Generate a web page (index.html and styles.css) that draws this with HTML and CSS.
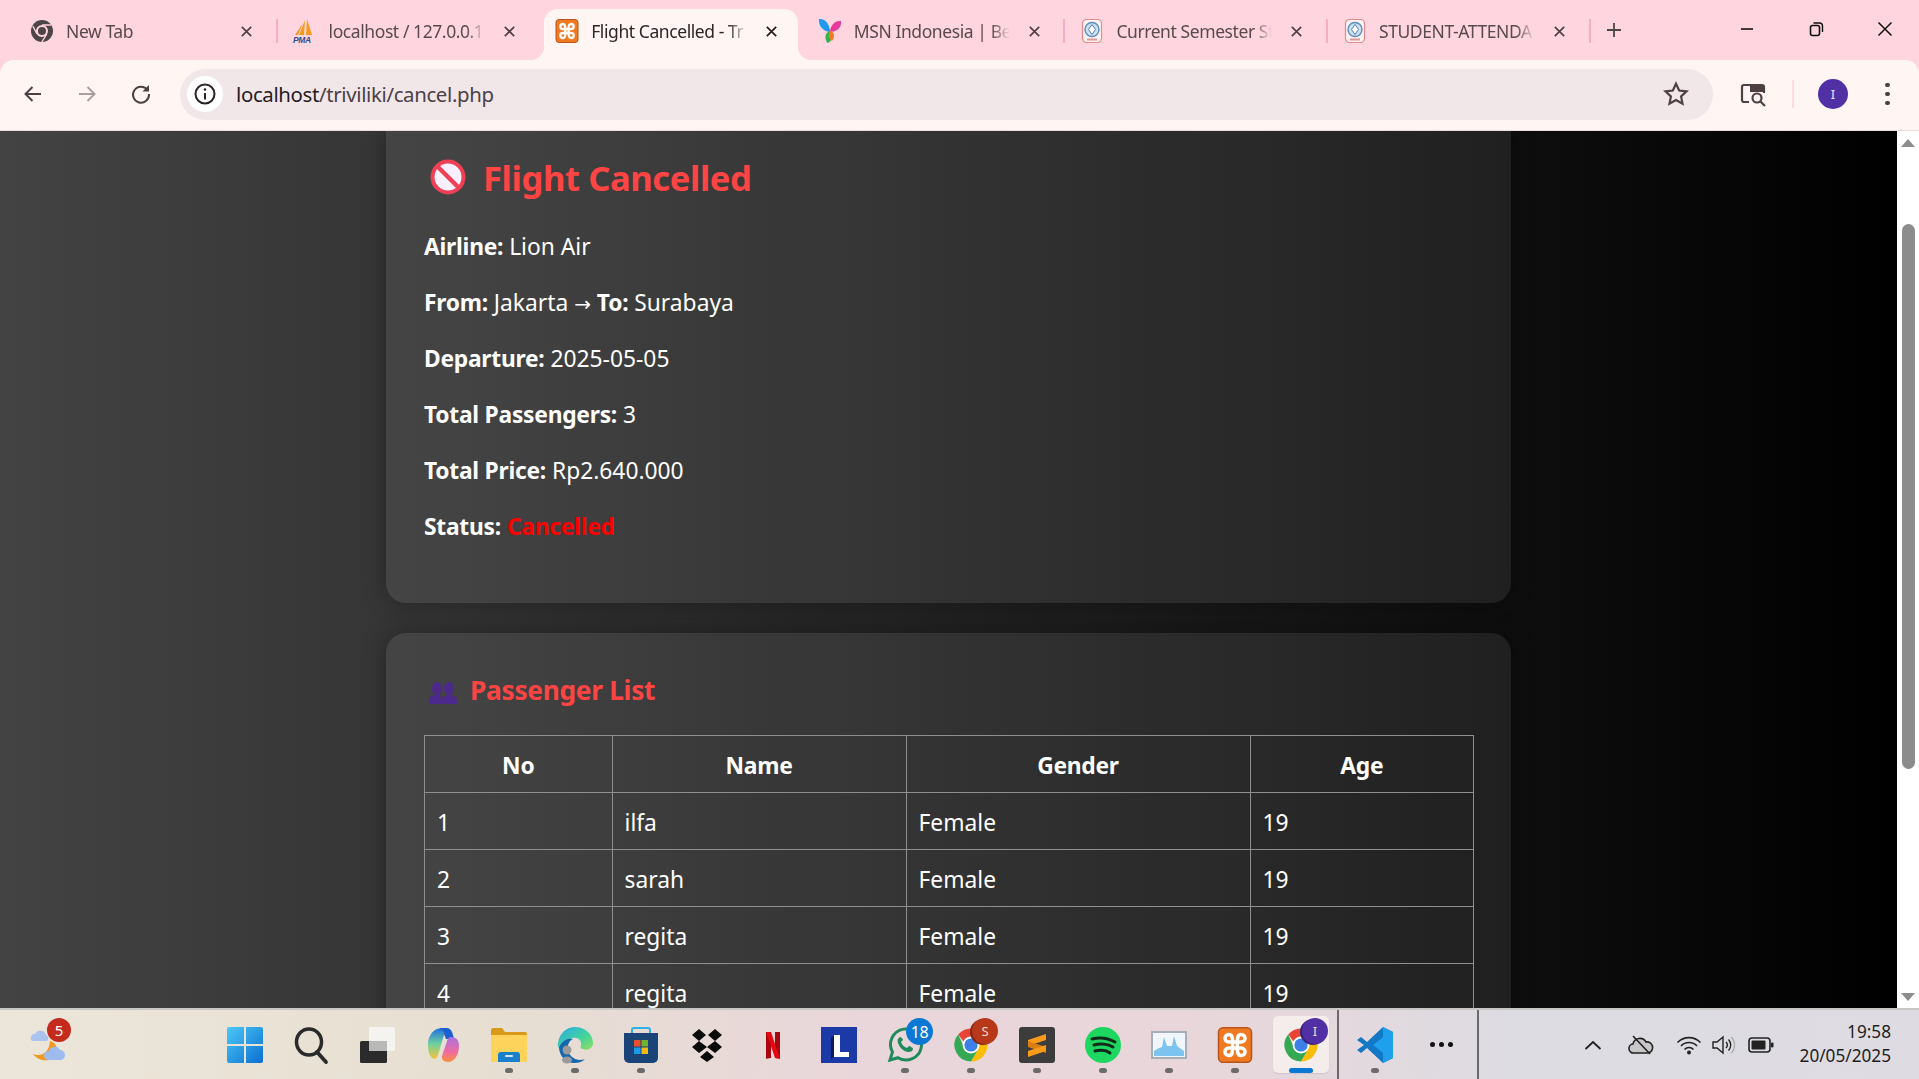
FILE: index.html
```html
<!DOCTYPE html>
<html lang="en">
<head>
<meta charset="utf-8">
<title>Flight Cancelled</title>
<link rel="stylesheet" href="styles.css">
</head>
<body>
<svg class="defs" aria-hidden="true">
  <symbol id="xampp" viewBox="0 0 24 24">
    <rect x="1" y="0.5" width="22" height="23" rx="3" fill="#ef7a22" stroke="#b9551a"/>
    <path d="M8 5c-3.600 0-3.600 5 0 5h8c3.600 0 3.600-5 0-5-2.400 0-2.400 2.500-2.400 5v4c0 2.500 0 5 2.400 5 3.600 0 3.600-5 0-5H8c-3.600 0-3.600 5 0 5 2.400 0 2.400-2.500 2.400-5v-4c0-2.500 0-5-2.400-5z" fill="none" stroke="#fff" stroke-width="2.300"/>
  </symbol>
  <symbol id="chrome" viewBox="0 0 24 24">
    <path d="M12 1a11 11 0 0 1 9.530 5.500H12a5.500 5.500 0 0 0-5 3.200L3.500 5A11 11 0 0 1 12 1z" fill="#ea4335"/>
    <path d="M21.530 6.500A11 11 0 0 1 12 23l4.700-8.200A5.500 5.500 0 0 0 16.800 9 5.500 5.500 0 0 0 12 6.500z" fill="#fbbc04"/>
    <path d="M3.500 5 7.900 15a5.500 5.500 0 0 0 8.800-.2L12 23A11 11 0 0 1 3.500 5z" fill="#34a853"/>
    <circle cx="12" cy="12" r="5.600" fill="#fff"/><circle cx="12" cy="12" r="4.400" fill="#3f7fe8"/>
  </symbol>
  <symbol id="uni" viewBox="0 0 24 24">
    <rect x="2.500" y="0.500" width="19" height="23" rx="4" fill="#fbf3f3" stroke="#e58a8a" stroke-width="1.200"/>
    <circle cx="12" cy="10.500" r="7" fill="#cfe0ef" stroke="#5b8dbd" stroke-width="1.400"/>
    <path d="M12 5.500l3.500 5-3.500 5-3.500-5z" fill="#fff" stroke="#4a7fb3"/>
    <rect x="7" y="19.500" width="10" height="2" fill="#d99"/>
  </symbol>
  <symbol id="close" viewBox="0 0 16 16">
    <path d="M3 3l10 10M13 3L3 13" fill="none" stroke="currentColor" stroke-width="1.800"/>
  </symbol>
</svg>

<header class="tabstrip">
  <div class="tab">
    <svg class="favicon" viewBox="0 0 24 24"><circle cx="12" cy="12" r="11" fill="#4d4648"/><circle cx="12" cy="12" r="6" fill="#ffd6df"/><circle cx="12" cy="12" r="4" fill="#4d4648"/><path d="M12 6h9M7 15L2.800 7M16.800 15l-5 8" stroke="#ffd6df" stroke-width="1.400"/></svg>
    <span class="title">New Tab</span>
    <svg class="x"><use href="#close"/></svg>
  </div>
  <div class="tab">
    <svg class="favicon" viewBox="0 0 24 24"><path d="M14 0l5 16h-6zM12 1l-1 15H6zM10 4L5 16H2z" fill="#f59a1f"/><text x="0" y="24" class="pma">PMA</text></svg>
    <span class="title">localhost / 127.0.0.1</span>
    <svg class="x"><use href="#close"/></svg>
  </div>
  <div class="tab active">
    <svg class="favicon"><use href="#xampp"/></svg>
    <span class="title">Flight Cancelled - Tr</span>
    <svg class="x"><use href="#close"/></svg>
  </div>
  <div class="tab">
    <svg class="favicon" viewBox="0 0 24 24"><path d="M1 0c6-1 11 5 11 13C7 13 0 8 1 0z" fill="#1e9bf0"/><path d="M23 2c1 7-5 11-11 11 0-5 4-12 11-11z" fill="#e6399b"/><path d="M11.500 12c-5 2-5 8-2 12 5-1 5-8 2-12z" fill="#35b34a"/><path d="M12 12c5 1 5 6 2 10-3-2-4-6-2-10z" fill="#f47b20"/></svg>
    <span class="title">MSN Indonesia | Be</span>
    <svg class="x"><use href="#close"/></svg>
  </div>
  <div class="tab sep">
    <svg class="favicon"><use href="#uni"/></svg>
    <span class="title">Current Semester St</span>
    <svg class="x"><use href="#close"/></svg>
  </div>
  <div class="tab sep">
    <svg class="favicon"><use href="#uni"/></svg>
    <span class="title">STUDENT-ATTENDA</span>
    <svg class="x"><use href="#close"/></svg>
  </div>
  <div class="tab-sep"></div>
  <svg class="newtab" viewBox="0 0 16 16"><path d="M8 1v14M1 8h14" stroke="#4d4648" stroke-width="1.800"/></svg>
  <div class="winctl">
    <svg viewBox="0 0 16 16"><path d="M2 8h12" stroke="#111" stroke-width="1.600"/></svg>
    <svg viewBox="0 0 16 16"><rect x="2.500" y="4.500" width="9" height="10" rx="2" fill="none" stroke="#111" stroke-width="1.600"/><path d="M5.500 2h6a3 3 0 0 1 3 3v6" fill="none" stroke="#111" stroke-width="1.400"/></svg>
    <svg viewBox="0 0 16 16"><path d="M1.500 1.500l13 13M14.500 1.500l-13 13" stroke="#111" stroke-width="1.500"/></svg>
  </div>
</header>

<nav class="toolbar">
  <svg class="tool" viewBox="0 0 24 24"><path d="M20 12H5M11.500 5L4.500 12l7 7" fill="none" stroke="#4d3f42" stroke-width="2"/></svg>
  <svg class="tool" viewBox="0 0 24 24"><path d="M4 12h15M12.500 5l7 7-7 7" fill="none" stroke="#ab9fa1" stroke-width="2"/></svg>
  <svg class="tool" viewBox="0 0 24 24"><path d="M18.500 8A8 8 0 1 0 20 12" fill="none" stroke="#4d3f42" stroke-width="2"/><path d="M20 3v6.500h-6.500z" fill="#4d3f42"/></svg>
  <div class="omnibox">
    <span class="info"><svg viewBox="0 0 24 24"><circle cx="12" cy="12" r="9.500" fill="none" stroke="#2c2226" stroke-width="2"/><path d="M12 11v6.500" stroke="#2c2226" stroke-width="2"/><circle cx="12" cy="7.500" r="1.300" fill="#2c2226"/></svg></span>
    <span class="url">localhost<span class="path">/triviliki/cancel.php</span></span>
    <svg class="star" viewBox="0 0 24 24"><path d="M12 2.500l2.900 6.300 6.800.8-5 4.700 1.300 6.700-6-3.400-6 3.400 1.300-6.700-5-4.700 6.800-.8z" fill="none" stroke="#4d3f42" stroke-width="2"/></svg>
  </div>
  <svg class="side" viewBox="0 0 26 26"><path d="M9 21H4a2 2 0 0 1-2-2V6a2 2 0 0 1 2-2h18a2 2 0 0 1 2 2v6" fill="none" stroke="#4d3f42" stroke-width="2.200"/><rect x="10" y="4" width="13" height="7" fill="#4d3f42"/><circle cx="17" cy="17" r="4.500" fill="none" stroke="#4d3f42" stroke-width="2.200"/><path d="M20.500 20.500L25 25" stroke="#4d3f42" stroke-width="2.200"/></svg>
  <span class="tool-sep"></span>
  <span class="avatar">I</span>
  <span class="menu"><i></i><i></i><i></i></span>
</nav>

<div class="viewport">
  <main class="page">
    <section class="card card-top">
      <h1 class="heading">
        <svg class="no-entry" viewBox="0 0 36 36"><circle cx="18" cy="18" r="15.500" fill="#f8efff" stroke="#ef4055" stroke-width="4"/><path d="M7 7l22 22" stroke="#ef4055" stroke-width="4.500"/></svg>
        <span>Flight Cancelled</span>
      </h1>
      <p class="line"><strong>Airline:</strong> Lion Air</p>
      <p class="line"><strong>From:</strong> Jakarta <span class="arrow-glyph">→</span> <strong>To:</strong> Surabaya</p>
      <p class="line"><strong>Departure:</strong> 2025-05-05</p>
      <p class="line"><strong>Total Passengers:</strong> 3</p>
      <p class="line"><strong>Total Price:</strong> Rp2.640.000</p>
      <p class="line"><strong>Status:</strong> <strong class="cancelled">Cancelled</strong></p>
    </section>
    <section class="card card-list">
      <h2 class="subheading">
        <svg class="people" viewBox="0 0 28 22"><g fill="#4b2a8c"><ellipse cx="8" cy="6.500" rx="5" ry="6.500"/><ellipse cx="20" cy="6.500" rx="5" ry="6.500"/><path d="M0 22v-3c0-4 3-6 7-6h2c3 0 5 2 5 6 0-4 2-6 5-6h2c4 0 7 2 7 6v3z"/></g></svg>
        <span>Passenger List</span>
      </h2>
      <table class="passengers">
        <colgroup><col class="c-no"><col class="c-name"><col class="c-gender"><col class="c-age"></colgroup>
        <thead><tr><th>No</th><th>Name</th><th>Gender</th><th>Age</th></tr></thead>
        <tbody>
          <tr><td>1</td><td>ilfa</td><td>Female</td><td>19</td></tr>
          <tr><td>2</td><td>sarah</td><td>Female</td><td>19</td></tr>
          <tr><td>3</td><td>regita</td><td>Female</td><td>19</td></tr>
          <tr><td>4</td><td>regita</td><td>Female</td><td>19</td></tr>
        </tbody>
      </table>
    </section>
  </main>
  <aside class="scrollbar">
    <svg class="arrow" viewBox="0 0 16 10"><path d="M8 1l7 8H1z" fill="#8c8c8c"/></svg>
    <div class="thumb"></div>
    <svg class="arrow arrow-down" viewBox="0 0 16 10"><path d="M1 1h14L8 9z" fill="#8c8c8c"/></svg>
  </aside>
</div>

<footer class="taskbar">
  <div class="weather">
    <svg class="ti" viewBox="0 0 36 36"><path d="M20 14c8 2 9 12 3 17-5 4-15 3-20-4 7 3 16 0 17-13z" fill="#f29a1f"/><path d="M2 14a4 4 0 0 1 3-7 6 6 0 0 1 11 1 3.500 3.500 0 0 1 1 6z" fill="#a9c4ee"/><path d="M18 33a4.500 4.500 0 0 1 1-9 6 6 0 0 1 11-1 5 5 0 0 1 5 5 5 5 0 0 1-4 5z" fill="#9dbbec"/></svg>
    <span class="badge badge-red">5</span>
  </div>
  <div class="apps">
    <div class="slot"><svg class="ti" viewBox="0 0 36 36"><defs><linearGradient id="win" x1="0" y1="0" x2="1" y2="1"><stop offset="0" stop-color="#4cc8f8"/><stop offset="1" stop-color="#0a6fd0"/></linearGradient></defs><path d="M0 2a2 2 0 0 1 2-2h15v17H0zM19 0h15a2 2 0 0 1 2 2v15H19zM0 19h17v17H2a2 2 0 0 1-2-2zM19 19h17v15a2 2 0 0 1-2 2H19z" fill="url(#win)"/></svg></div>
    <div class="slot"><svg class="ti" viewBox="0 0 36 36"><ellipse cx="16" cy="15" rx="12.500" ry="13" fill="none" stroke="#2a2a2a" stroke-width="3.500"/><path d="M24 25l9 10" stroke="#2a2a2a" stroke-width="3.800" stroke-linecap="round"/></svg></div>
    <div class="slot"><svg class="ti" viewBox="0 0 36 36"><rect x="1" y="14" width="27" height="22" rx="1.500" fill="#2b2b2b"/><rect x="10" y="0" width="26" height="24" rx="1.500" fill="#f5f3ef"/><rect x="10" y="14" width="18" height="10" fill="#b9b9b7"/></svg></div>
    <div class="slot"><svg class="ti" viewBox="0 0 36 36"><defs><linearGradient id="cop1" x1="0" y1="0" x2="0" y2="1"><stop offset="0" stop-color="#1f6fe0"/><stop offset=".5" stop-color="#6fd0a0"/><stop offset="1" stop-color="#f3c33c"/></linearGradient><linearGradient id="cop2" x1="0" y1="0" x2="0" y2="1"><stop offset="0" stop-color="#a874e0"/><stop offset=".6" stop-color="#f06aa0"/><stop offset="1" stop-color="#f8923c"/></linearGradient></defs><path d="M14 1h8c3 0 5 3 6 7l1 4h-8l-2-5c-1-3-3-4-5-6z" fill="#1e5fd0"/><path d="M12 2c-5 2-9 8-9 15 0 6 1 12 4 14 3 2 5 0 6-3l6-20c1-4-3-8-7-6z" fill="url(#cop1)"/><path d="M26 10c5 0 8 3 8 9 0 9-5 16-11 16-4 0-7-3-6-6l5-15c1-3 2-4 4-4z" fill="url(#cop2)"/></svg></div>
    <div class="slot"><svg class="ti" viewBox="0 0 36 36"><path d="M0 3a2 2 0 0 1 2-2h9l3 4h20a2 2 0 0 1 2 2v4H0z" fill="#d99a1a"/><path d="M0 8h36v26a1 1 0 0 1-1 1H1a1 1 0 0 1-1-1z" fill="#fdd35c"/><path d="M7 28a3 3 0 0 1 3-3h16a3 3 0 0 1 3 3v7H7z" fill="#1b80cc"/><rect x="14" y="28" width="8" height="2" rx="1" fill="#cfe6f7"/></svg><i class="run"></i></div>
    <div class="slot"><svg class="ti" viewBox="0 0 36 36"><defs><linearGradient id="edge" x1="0" y1="0" x2="1" y2="1"><stop offset="0" stop-color="#2ea7e8"/><stop offset=".55" stop-color="#3fd3a0"/><stop offset="1" stop-color="#8fe060"/></linearGradient></defs><path d="M18 0c10 0 18 7 18 16 0 5-5 8-10 6-2 0-3-2-2-4 1-4-3-8-8-7C8 12 3 17 1 21 0 10 7 0 18 0z" fill="url(#edge)"/><path d="M2 20c3-6 9-10 14-8-4 2-6 6-5 11 1 7 9 12 17 9-3 3-7 4-11 4C9 36 2 29 2 20z" fill="#1466ad"/><circle cx="10" cy="23" r="4.500" fill="#9a9a9a"/><ellipse cx="10" cy="33" rx="5" ry="3.500" fill="#9a9a9a"/></svg><i class="run"></i></div>
    <div class="slot"><svg class="ti" viewBox="0 0 36 36"><path d="M9 6V3a2 2 0 0 1 2-2h14a2 2 0 0 1 2 2v3" fill="none" stroke="#2bb0e8" stroke-width="2"/><path d="M1 6h34v25a5 5 0 0 1-5 5H6a5 5 0 0 1-5-5z" fill="#1a4377"/><rect x="11" y="13" width="6.500" height="6.500" fill="#e8502a"/><rect x="18.500" y="13" width="6.500" height="6.500" fill="#6fb62c"/><rect x="11" y="20.500" width="6.500" height="6.500" fill="#1e9ae8"/><rect x="18.500" y="20.500" width="6.500" height="6.500" fill="#fbb810"/></svg><i class="run"></i></div>
    <div class="slot"><svg class="ti" viewBox="0 0 36 36"><path d="M10 2l7 6-7 6-7-6zM26 2l7 6-7 6-7-6zM10 14l8 6-8 6-7-6zM26 14l7 6-7 6-8-6zM18 24l7 6-7 5-7-5z" fill="#0b0b0b"/></svg></div>
    <div class="slot"><svg class="ti" viewBox="0 0 36 36"><path d="M11 5h5v26l-5 .8z" fill="#a8070f"/><path d="M20 5h5v26.800L20 31z" fill="#a8070f"/><path d="M11 5h5l9 26.800-5-.8z" fill="#e50914"/></svg></div>
    <div class="slot"><svg class="ti" viewBox="0 0 36 36"><rect width="36" height="36" fill="#1c39a8"/><path d="M13 8h6v17h9v5H13z" fill="#fff"/><path d="M13 30l-3 2V11l3-3z" fill="#0e1c55"/></svg></div>
    <div class="slot"><svg class="ti" viewBox="0 0 36 36"><path d="M3 33l2.500-8A15.500 15.500 0 1 1 11 30.700z" fill="none" stroke="#1f8a5b" stroke-width="3"/><path d="M13 10c-2 1-3 3-2 6 2 5 5 8 10 9 3 0 5-1 5-3 0-1-3-3-4-3l-2 2c-3-1-5-3-6-6l2-2c0-1-2-3-3-3z" fill="#1f8a5b"/></svg><span class="badge badge-blue">18</span><i class="run"></i></div>
    <div class="slot"><svg class="ti"><use href="#chrome"/></svg><span class="badge badge-profile badge-s">S</span><i class="run"></i></div>
    <div class="slot"><svg class="ti" viewBox="0 0 36 36"><rect width="36" height="36" rx="3" fill="#3c3c3c"/><path d="M9 13l18-6v6L9 19z" fill="#f89a1a"/><path d="M9 14l18 6v6L9 20z" fill="#d97f12"/><path d="M9 24l18-6v6L9 30z" fill="#f89a1a"/></svg><i class="run"></i></div>
    <div class="slot"><svg class="ti" viewBox="0 0 36 36"><circle cx="18" cy="18" r="18" fill="#1ed760"/><path d="M7 12c8-2 16-1 23 3M9 18c6-2 14-1 19 2M10 24c5-1 11-1 15 2" fill="none" stroke="#10291a" stroke-width="3" stroke-linecap="round"/></svg><i class="run"></i></div>
    <div class="slot"><svg class="ti" viewBox="0 0 36 36"><rect x="1" y="5" width="34" height="26" fill="#f1f6fb" stroke="#a6afb8" stroke-width="2"/><path d="M3 24l5-3 3-1 2-10 3 9h5l2-10 3 10 7 5v5H3z" fill="#7cc3ef"/></svg><i class="run"></i></div>
    <div class="slot"><svg class="ti"><use href="#xampp"/></svg><i class="run"></i></div>
    <div class="slot slot-active"><svg class="ti"><use href="#chrome"/></svg><span class="badge badge-profile badge-i">I</span><i class="run-active"></i></div>
    <span class="task-sep"></span>
    <div class="slot"><svg class="ti" viewBox="0 0 36 36"><path d="M26 0l10 5v26l-10 5L10 21l-6 5-4-3 7-5-7-5 4-3 6 5z" fill="#1277c4"/><path d="M26 0l10 5v26l-10 5V26l-10-8 10-8z" fill="#1fa0ec"/></svg><i class="run"></i></div>
    <div class="slot"><span class="more"><i></i><i></i><i></i></span></div>
    <span class="task-sep"></span>
  </div>
  <div class="tray">
    <svg class="chev" viewBox="0 0 18 10"><path d="M1.500 9L9 2l7.500 7" fill="none" stroke="#222" stroke-width="1.800"/></svg>
    <svg class="cloud" viewBox="0 0 26 20"><path d="M6 18a4.500 4.500 0 0 1-1-9 7 7 0 0 1 13-2 5.500 5.500 0 0 1 2 11z" fill="#c9c7c9" stroke="#222" stroke-width="1.600"/><path d="M5 1l17 18" stroke="#222" stroke-width="1.600"/></svg>
    <svg class="wifi" viewBox="0 0 26 20"><path d="M1.500 7.500a16 16 0 0 1 23 0M5 11a11 11 0 0 1 16 0M8.500 14.500a6 6 0 0 1 9 0" fill="none" stroke="#222" stroke-width="1.600"/><circle cx="13" cy="17.500" r="2" fill="#222"/></svg>
    <svg class="vol" viewBox="0 0 24 20"><path d="M1 7h4l6-5v16l-6-5H1z" fill="none" stroke="#222" stroke-width="1.400"/><path d="M14 7a4 4 0 0 1 0 6M16.500 4.500a8 8 0 0 1 0 11" fill="none" stroke="#222" stroke-width="1.400"/><path d="M19.500 2a12 12 0 0 1 0 16" fill="none" stroke="#aaa" stroke-width="1.200"/></svg>
    <svg class="batt" viewBox="0 0 26 16"><rect x="1" y="1" width="21" height="14" rx="3" fill="none" stroke="#222" stroke-width="1.600"/><rect x="3.500" y="3.500" width="14" height="9" rx="1" fill="#222"/><rect x="23" y="5.500" width="2.500" height="5" rx="1" fill="#222"/></svg>
    <div class="clock"><span>19:58</span><span>20/05/2025</span></div>
  </div>
</footer>
</body>
</html>
```
FILE: styles.css
```css
* { box-sizing: border-box; }
html, body { margin: 0; height: 100%; }
body {
  width: 1919px; height: 1079px; overflow: hidden;
  display: flex; flex-direction: column;
  font-family: "Noto Sans", "Open Sans", sans-serif;
  background: #ffd6df;
}
.defs { display: none; }

/* tab strip */
.tabstrip {
  height: 60px; flex: none;
  display: flex; align-items: flex-end;
  padding-left: 16px;
  background: #ffd6df;
}
.tab {
  position: relative;
  width: 262.600px; height: 51px; flex: none;
  display: flex; align-items: center;
  padding: 0 0 7px 14px;
  color: #584a4e;
  font-size: 17.500px; letter-spacing: -0.42px;
}
.tab.sep::before, .tab-sep {
  content: ""; width: 2px; height: 24px; background: #f8aebf;
}
.tab.sep::before { position: absolute; left: -3px; top: 10px; }
.tab-sep { align-self: flex-end; margin: 0 0 17px -3px; flex: none; }
.tab:nth-child(2)::after {
  content: ""; position: absolute; left: -3px; top: 10px;
  width: 2px; height: 24px; background: #f8aebf;
}
.tab.active {
  width: 253.600px; margin: 0 6px 0 3px; padding-left: 11px;
  background: #fff6f4; color: #2d2427;
  border-radius: 14px 14px 0 0;
}
.tab.active::before, .tab.active::after {
  content: ""; position: absolute; bottom: 0; width: 14px; height: 14px;
}
.tab.active::before {
  left: -14px;
  background: radial-gradient(circle at 0 0, transparent 14px, #fff6f4 14.500px);
}
.tab.active::after {
  right: -14px;
  background: radial-gradient(circle at 100% 0, transparent 14px, #fff6f4 14.500px);
}
.tab.active .x { color: #221c1e; }
.favicon { width: 24px; height: 24px; flex: none; overflow: visible; }
.pma { font: italic 700 8.500px "Liberation Sans", sans-serif; fill: #2c4f8f; }
.title {
  flex: 0 0 156px; margin-left: 12px;
  white-space: nowrap; overflow: hidden;
  -webkit-mask-image: linear-gradient(to right, #000 88%, transparent 100%);
  mask-image: linear-gradient(to right, #000 88%, transparent 100%);
}
.x { width: 15px; height: 15px; flex: none; margin-left: 17px; color: #4d4144; }
.newtab { width: 16px; height: 16px; margin: 0 0 22px 15px; flex: none; }
.winctl {
  display: flex; gap: 53px; margin: 0 0 23px 117px; align-items: center; flex: none;
}
.winctl svg { width: 16px; height: 16px; }

/* toolbar */
.toolbar {
  height: 71px; flex: none;
  display: flex; align-items: center;
  padding: 0 0 2px 21px;
  background: #fff6f4;
  border-bottom: 1px solid #ecdcda;
  border-radius: 14px 14px 0 0;
}
.tool { width: 24px; height: 24px; flex: none; margin-right: 30px; }
.omnibox {
  width: 1533px; height: 51px; margin-left: -3px;
  display: flex; align-items: center;
  padding: 0 24px 0 7px;
  background: #f1e6e8; border-radius: 26px;
}
.info {
  width: 36px; height: 36px; border-radius: 50%; background: #fff;
  display: flex; align-items: center; justify-content: center;
}
.info svg { width: 24px; height: 24px; }
.url { margin-left: 13px; flex: 1; font-size: 20.400px; letter-spacing: -0.35px; color: #241b1f; }
.path { color: #4b4146; }
.star { width: 26px; height: 26px; }
.side { width: 28px; height: 26px; margin-left: 26px; flex: none; }
.tool-sep { width: 2px; height: 28px; background: #fbdde0; margin-left: 25px; }
.avatar {
  width: 30px; height: 30px; border-radius: 50%; margin-left: 24px;
  background: #5030a4; color: #e9e3f5;
  display: flex; align-items: center; justify-content: center;
  font-size: 13px;
}
.menu { display: flex; flex-direction: column; gap: 4.500px; margin-left: 37px; }
.menu i { width: 4.500px; height: 4.500px; border-radius: 50%; background: #4d3f42; }

/* page */
.viewport { flex: 1; min-height: 0; display: flex; }
.page {
  width: 1897px; overflow: hidden;
  background: linear-gradient(to right, #434343, #000000);
  color: #fff;
  font-size: 22.800px;
}
.card {
  width: 1125px; margin: 0 0 30px 386px;
  padding: 0 37px 36px 38px;
  background: rgba(255, 255, 255, 0.08);
  border-radius: 20px;
  box-shadow: 0 0 25px rgba(0, 0, 0, 0.3);
}
.card-top { border-radius: 0 0 20px 20px; padding-top: 22px; }
.card-list { padding-top: 38px; }
.heading {
  height: 48px; margin: 0 0 30px;
  display: flex; align-items: center;
  color: #ff4444; font-size: 34.600px; font-weight: 700; letter-spacing: -0.4px;
}
.no-entry { width: 36px; height: 36px; margin: 0 17px 0 6px; flex: none; }
.line { height: 32px; margin: 0 0 24px; line-height: 32px; }
.line strong { font-weight: 700; letter-spacing: -0.25px; }
.arrow-glyph { font-family: "DejaVu Sans", sans-serif; font-size: 20px; }
.cancelled { color: #ff0000; }
.subheading {
  height: 38px; margin: 0 0 26px;
  display: flex; align-items: center;
  color: #ff4444; font-size: 26.300px; font-weight: 700; letter-spacing: -0.3px;
}
.people { width: 28px; height: 22px; margin: 6px 13px 0 5px; flex: none; }
.passengers {
  width: 1049px; table-layout: fixed; border-collapse: collapse;
}
.c-no { width: 187.500px; }
.c-name { width: 294px; }
.c-gender { width: 344px; }
.c-age { width: 223.500px; }
.passengers th, .passengers td {
  height: 57px; padding: 4px 12px 0;
  border: 1px solid #8f8f8f;
  line-height: 32px; text-align: left;
}
.passengers th { text-align: center; font-weight: 700; letter-spacing: -0.25px; }

/* scrollbar */
.scrollbar {
  flex: 1; background: #fff;
  display: flex; flex-direction: column; align-items: center;
  padding: 7px 0 6px;
}
.arrow { width: 16px; height: 10px; flex: none; }
.arrow-down { margin-top: auto; }
.thumb {
  width: 13px; height: 545px; margin-top: 76px;
  background: #8c8c8c; border-radius: 7px;
}

/* taskbar */
.taskbar {
  height: 71px; flex: none;
  display: flex; align-items: center;
  border-top: 2px solid #c9c6c6;
  background: linear-gradient(to right, #ece5d9 0%, #e6dfd2 25%, #e9d6da 45%, #e8d6da 62%, #dcdce2 80%, #dfdbe2 100%);
}
.weather { position: relative; width: 36px; height: 36px; margin-left: 30px; flex: none; }
.ti { width: 36px; height: 36px; display: block; overflow: visible; }
.badge {
  position: absolute; display: flex; align-items: center; justify-content: center;
  border-radius: 50%; color: #fff;
}
.badge-red { left: 17px; top: -9px; width: 24px; height: 24px; background: #c42b1c; font-size: 15px; }
.badge-blue { left: 34px; top: 8px; width: 27px; height: 27px; background: #0a78d4; font-size: 16px; letter-spacing: -0.5px; }
.badge-profile { left: 34px; top: 8px; width: 26px; height: 26px; font-size: 13px; color: #e8d8d0; }
.badge-s { background: #b8391a; box-shadow: -2px 1px 0 #7d2a14; }
.badge-i { background: #5030a4; box-shadow: -2px 1px 0 #3a2278; }
.apps { display: flex; align-items: center; height: 100%; margin-left: 146px; flex: none; }
.slot {
  position: relative; width: 66px; height: 100%; flex: none;
  display: flex; align-items: center; justify-content: center;
}
.run {
  position: absolute; left: 29px; bottom: 6px;
  width: 8px; height: 5px; border-radius: 3px; background: #6d6a6a;
}
.slot-active::before {
  content: ""; position: absolute; left: 5px; right: 5px; top: 6px; bottom: 6px;
  background: #f5ecec; border-radius: 5px; box-shadow: 0 1px 1px #cfc4c6;
}
.slot-active .ti { position: relative; }
.run-active {
  position: absolute; left: 21px; bottom: 6px;
  width: 24px; height: 5px; border-radius: 3px; background: #0a78d4;
}
.task-sep { width: 2px; height: 100%; margin: 0 3px; background: #6e6a6c; flex: none; }
.more { display: flex; gap: 4px; }
.more i { width: 5px; height: 5px; border-radius: 50%; background: #111; }
.tray { display: flex; align-items: center; flex: 1; padding-left: 102px; }
.chev { width: 18px; height: 10px; flex: none; }
.cloud { width: 26px; height: 20px; margin-left: 26px; flex: none; }
.wifi { width: 26px; height: 20px; margin-left: 22px; flex: none; }
.vol { width: 24px; height: 20px; margin-left: 10px; flex: none; }
.batt { width: 26px; height: 16px; margin-left: 12px; flex: none; }
.clock {
  margin: -2px 28px 0 auto;
  display: flex; flex-direction: column; align-items: flex-end;
  font-size: 17.200px; line-height: 24px; color: #1f1f1f;
}
```
